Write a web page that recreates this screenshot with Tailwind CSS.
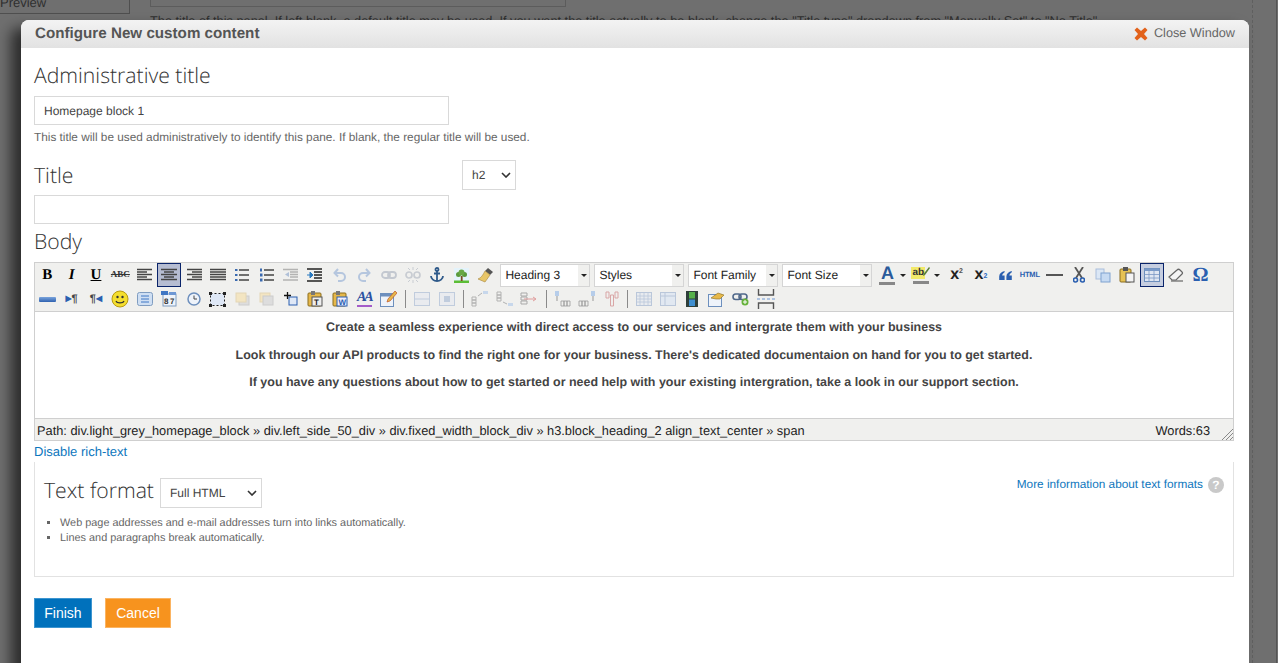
<!DOCTYPE html>
<html lang="en">
<head>
  <meta charset="UTF-8">
  <meta name="viewport" content="width=device-width, initial-scale=1.0">
  <title>Configure New custom content</title>
  <script src="https://cdn.jsdelivr.net/npm/@tailwindcss/browser@4"></script>
</head>
<body class="relative h-[663px] overflow-hidden bg-[#6f6f6f] font-['Liberation_Sans',Arial,sans-serif] text-[#4a4a4a] [text-rendering:geometricPrecision]">
  <!-- page behind the overlay -->
  <div class="flex h-full">
    <div class="h-[14px] w-[130px] shrink-0 overflow-hidden border-r border-b border-[#4f4f4f]">
      <div class="-mt-[5px] text-[13px] leading-[15px] text-[#2f2f2f]">Preview</div>
    </div>
    <div class="flex-1 border-r border-dashed border-[#5f5f5f] pl-[20px]">
      <div class="h-[7px] w-[416px] border border-t-0 border-[#5c5c5c]"></div>
      <p class="mt-[6px] whitespace-nowrap text-[12.75px] leading-[15px] text-[#2f2f2f]">The title of this panel. If left blank, a default title may be used. If you want the title actually to be blank, change the "Title type" dropdown from "Manually Set" to "No Title".</p>
    </div>
    <div class="mr-[1px] h-full w-[24px] border-r border-[#555]"></div>
  </div>

  <!-- modal -->
  <div class="absolute left-[21px] top-[20px] h-[660px] w-[1228px] rounded-t-[8px] bg-white shadow-[-10px_8px_14px_rgba(0,0,0,0.6)]">
    <div class="flex h-[28px] items-center justify-between rounded-t-[8px] bg-gradient-to-b from-[#f3f3f3] to-[#e2e2e2] pl-[14px] pr-[14px]">
      <h1 class="text-[15.2px] font-bold text-[#555]">Configure New custom content</h1>
      <div class="flex items-center gap-[6px] text-[12.7px] text-[#666]">
        <svg width="14" height="14" viewBox="0 0 14 14"><path d="M3 0.5 7 4 11 .5 13.500 3 10 7l3.500 4L11 13.500 7 10 3 13.500.5 11 4 7 .5 3z" fill="#e2611a"/></svg>
        Close Window
      </div>
    </div>

    <div class="px-[13px]">
      <h2 class="mt-[13px] font-['Open_Sans',sans-serif] text-[21.2px] font-light leading-[30px] text-[#333]">Administrative title</h2>
      <div class="mt-[5px] flex h-[29px] w-[415px] items-center border border-[#d9d9d9] px-[9px] text-[12px] text-[#444]">Homepage block 1</div>
      <p class="mt-[5px] text-[11.8px] leading-[14px] text-[#666]">This title will be used administratively to identify this pane. If blank, the regular title will be used.</p>

      <div class="mt-[16px] flex items-start">
        <div class="w-[428px]">
          <h2 class="font-['Open_Sans',sans-serif] text-[21.2px] font-light leading-[32px] text-[#333]">Title</h2>
        </div>
        <div class="flex h-[30px] w-[54px] items-center justify-between border border-[#d9d9d9] pl-[9px] pr-[4px] text-[12px] text-[#444]">h2
          <svg width="10" height="6" viewBox="0 0 10 6"><path d="M1 1l4 4 4-4" fill="none" stroke="#333" stroke-width="1.600"/></svg>
        </div>
      </div>
      <div class="mt-[3px] h-[29px] w-[415px] border border-[#d9d9d9]"></div>
      <h2 class="mt-[3px] font-['Open_Sans',sans-serif] text-[21.2px] font-light leading-[30px] text-[#333]">Body</h2>

      <!-- editor -->
      <div class="mt-[5px] w-[1200px] border border-[#cfcfcf] bg-[#f0f0ee]">
        <div class="flex h-[24px] items-center text-[#222]">
          <span class="flex h-[24px] w-[24.4px] items-center justify-center font-['Liberation_Serif',serif] text-[15px] font-bold text-black">B</span>
          <span class="flex h-[24px] w-[24.4px] items-center justify-center font-['Liberation_Serif',serif] text-[15px] font-bold italic text-black">I</span>
          <span class="flex h-[24px] w-[24.4px] items-center justify-center font-['Liberation_Serif',serif] text-[15px] font-bold text-black underline">U</span>
          <span class="flex h-[24px] w-[24.4px] items-center justify-center font-['Liberation_Serif',serif] text-[9px] font-bold text-[#333] line-through">ABC</span>
          <span class="flex h-[24px] w-[24.4px] items-center justify-center"><svg width="16" height="14" viewBox="0 0 16 14" stroke="#444" stroke-width="1.500"><path d="M0 1.500h15M0 4h10M0 6.500h15M0 9h10M0 11.500h15"/></svg></span>
          <span class="flex h-[24px] w-[24.4px] items-center justify-center border border-[#0a246a] bg-[#b6bdd2]"><svg width="16" height="14" viewBox="0 0 16 14" stroke="#444" stroke-width="1.500"><path d="M0 1.500h16M3 4h10M0 6.500h16M3 9h10M0 11.500h16"/></svg></span>
          <span class="flex h-[24px] w-[24.4px] items-center justify-center"><svg width="16" height="14" viewBox="0 0 16 14" stroke="#444" stroke-width="1.500"><path d="M1 1.500h15M6 4h10M1 6.500h15M6 9h10M1 11.500h15"/></svg></span>
          <span class="flex h-[24px] w-[24.4px] items-center justify-center"><svg width="16" height="14" viewBox="0 0 16 14" stroke="#444" stroke-width="1.500"><path d="M0 1.500h16M0 4h16M0 6.500h16M0 9h16M0 11.500h16"/></svg></span>
          <span class="flex h-[24px] w-[24.4px] items-center justify-center"><svg width="16" height="14" viewBox="0 0 16 14"><path d="M5 2h10M5 7h10M5 12h10" stroke="#444" stroke-width="1.300"/><path d="M1 1h2.500v2H1zM1 6h2.500v2H1zM1 11h2.500v2H1z" fill="#3a6ab0"/></svg></span>
          <span class="flex h-[24px] w-[24.4px] items-center justify-center"><svg width="16" height="14" viewBox="0 0 16 14"><path d="M5 2h10M5 7h10M5 12h10" stroke="#444" stroke-width="1.300"/><path d="M1 .500h2v3H1zM1 5.500h2.500v3H1zM1 10.500h2.500v3H1z" fill="#3a6ab0"/></svg></span>
          <span class="flex h-[24px] w-[24.4px] items-center justify-center"><svg width="16" height="14" viewBox="0 0 16 14" opacity=".35"><path d="M0 1.500h15M7 4h8M7 6.500h8M7 9h8M0 12h15" stroke="#444" stroke-width="1.300"/><path d="M6 4v5L2 6.500z" fill="#3a6ab0"/></svg></span>
          <span class="flex h-[24px] w-[24.4px] items-center justify-center"><svg width="16" height="16" viewBox="0 0 16 16"><path d="M0 2h15M7 5h8M7 8h8M7 11h8M0 14h15" stroke="#222" stroke-width="1.400"/><path d="M0 8h3M3 5v6l3-3z" fill="#2a7ac0" stroke="#2a7ac0"/></svg></span>
          <span class="flex h-[24px] w-[24.4px] items-center justify-center"><svg width="14" height="14" viewBox="0 0 14 14" fill="none" stroke="#b5c6de" stroke-width="2"><path d="M2 5h6a4 4 0 0 1 0 8H5"/><path d="M5 1 1.500 5 5 8.500"/></svg></span>
          <span class="flex h-[24px] w-[24.4px] items-center justify-center"><svg width="14" height="14" viewBox="0 0 14 14" fill="none" stroke="#b5c6de" stroke-width="2"><path d="M12 5H6a4 4 0 0 0 0 8h3"/><path d="M9 1l3.500 4L9 8.500"/></svg></span>
          <span class="flex h-[24px] w-[24.4px] items-center justify-center"><svg width="16" height="10" viewBox="0 0 16 10" fill="none" stroke="#c3c8d0" stroke-width="1.800"><rect x="1" y="2" width="8" height="6" rx="3"/><rect x="7" y="2" width="8" height="6" rx="3"/></svg></span>
          <span class="flex h-[24px] w-[24.4px] items-center justify-center"><svg width="16" height="16" viewBox="0 0 16 16" fill="none" stroke="#c8ccd2" stroke-width="1.700"><rect x="1" y="5" width="6" height="6" rx="3"/><rect x="9" y="5" width="6" height="6" rx="3"/><path d="M8 0v3M8 13v3M3 1l2 2M13 1l-2 2M3 15l2-2M13 15l-2-2" stroke-width="1"/></svg></span>
          <span class="flex h-[24px] w-[24.4px] items-center justify-center"><svg width="14" height="16" viewBox="0 0 14 16" fill="none" stroke="#2f5a8a" stroke-width="1.800"><circle cx="7" cy="2.500" r="1.500"/><path d="M7 4v11M4 6.500h6M1 9c0 3 3 5 6 5s6-2 6-5"/></svg></span>
          <span class="flex h-[24px] w-[24.4px] items-center justify-center"><svg width="15" height="15" viewBox="0 0 15 15"><rect width="15" height="15" fill="#e4f3fb"/><rect y="12.500" width="15" height="2.500" fill="#5cbd35"/><rect x="6.800" y="8" width="1.800" height="5" fill="#7a4a20"/><circle cx="4.500" cy="6.500" r="2.500" fill="#5a9a3c"/><circle cx="10.500" cy="6.500" r="2.500" fill="#5a9a3c"/><circle cx="7.500" cy="4.500" r="3" fill="#68a845"/></svg></span>
          <span class="flex h-[24px] w-[24.4px] items-center justify-center"><svg width="16" height="16" viewBox="0 0 16 16"><path d="M10 1l5 4-3 3-5-4z" fill="#555"/><path d="M7 4l5 4-5 7-7-3c3-1 5-4 7-8z" fill="#e8c668" stroke="#a8873a" stroke-width=".6"/></svg></span>

          <div class="ml-[2px] flex h-[23px] w-[90px] shrink-0 items-center border border-[#d5d5d5] bg-white pl-[4px] text-[12px] text-[#222]"><span class="flex-1">Heading 3</span><span class="flex h-full w-[11px] items-center justify-center bg-[#f0f0ee]"><svg width="6" height="3" viewBox="0 0 6 3"><path d="M0 0h6L3 3z" fill="#222"/></svg></span></div>
          <div class="ml-[4px] flex h-[23px] w-[90px] shrink-0 items-center border border-[#d5d5d5] bg-white pl-[4px] text-[12px] text-[#222]"><span class="flex-1">Styles</span><span class="flex h-full w-[11px] items-center justify-center bg-[#f0f0ee]"><svg width="6" height="3" viewBox="0 0 6 3"><path d="M0 0h6L3 3z" fill="#222"/></svg></span></div>
          <div class="ml-[4px] flex h-[23px] w-[90px] shrink-0 items-center border border-[#d5d5d5] bg-white pl-[4px] text-[12px] text-[#222]"><span class="flex-1">Font Family</span><span class="flex h-full w-[11px] items-center justify-center bg-[#f0f0ee]"><svg width="6" height="3" viewBox="0 0 6 3"><path d="M0 0h6L3 3z" fill="#222"/></svg></span></div>
          <div class="ml-[4px] flex h-[23px] w-[90px] shrink-0 items-center border border-[#d5d5d5] bg-white pl-[4px] text-[12px] text-[#222]"><span class="flex-1">Font Size</span><span class="flex h-full w-[11px] items-center justify-center bg-[#f0f0ee]"><svg width="6" height="3" viewBox="0 0 6 3"><path d="M0 0h6L3 3z" fill="#222"/></svg></span></div>

          <span class="ml-[5px] flex h-[24px] w-[20px] flex-col items-center justify-center text-[18px] font-bold leading-[17px] text-[#2a5a9a]">A<span class="block h-[3px] w-[16px] bg-[#888]"></span></span>
          <span class="flex w-[12px] justify-center"><svg width="6" height="3" viewBox="0 0 6 3"><path d="M0 0h6L3 3z" fill="#222"/></svg></span>
          <span class="relative ml-[2px] flex h-[24px] w-[20px] flex-col items-center justify-center text-[10px] font-bold leading-[12px] text-[#333]"><span class="self-start bg-[#f2e96a] px-[1px]">ab</span><span class="mt-[2px] block h-[3px] w-[16px] bg-[#888]"></span><svg class="absolute right-[1px] top-[4px]" width="7" height="9" viewBox="0 0 7 9"><path d="M6 0l1 1-5 7-2 1 .5-2z" fill="#5b7f3a"/></svg></span>
          <span class="flex w-[12px] justify-center"><svg width="6" height="3" viewBox="0 0 6 3"><path d="M0 0h6L3 3z" fill="#222"/></svg></span>
          <span class="ml-[1px] flex h-[24px] w-[24.4px] items-center justify-center text-[16px] font-bold leading-none text-[#222]">x<sup class="text-[7px] text-[#555]">2</sup></span>
          <span class="flex h-[24px] w-[24.4px] items-center justify-center text-[16px] font-bold leading-none text-[#222]">x<sub class="text-[7px] text-[#2a6ac0]">2</sub></span>
          <span class="flex h-[24px] w-[24.4px] items-center justify-center"><svg width="13" height="9" viewBox="0 0 14 10" fill="#2a5fb0"><path d="M6 0v1.500C4.500 2.500 3.500 3.500 3.300 5H6v5H0V6c0-3 2.500-5 6-6zM14 0v1.500c-1.500 1-2.500 2-2.700 3.500H14v5H8V6c0-3 2.500-5 6-6z"/></svg></span>
          <span class="flex h-[24px] w-[24.4px] items-center justify-center text-[7.5px] font-bold tracking-tight text-[#2a5fb0]">HTML</span>
          <span class="flex h-[24px] w-[24.4px] items-center justify-center"><span class="block h-[2px] w-[17px] bg-[#555]"></span></span>
          <span class="flex h-[24px] w-[24.4px] items-center justify-center"><svg width="12" height="16" viewBox="0 0 12 16" fill="none"><path d="M2 0l7 11M10 0L3 11" stroke="#555" stroke-width="1.800"/><circle cx="2.500" cy="13" r="2" stroke="#2a5fb0" stroke-width="1.600"/><circle cx="9.500" cy="13" r="2" stroke="#2a5fb0" stroke-width="1.600"/></svg></span>
          <span class="flex h-[24px] w-[24.4px] items-center justify-center"><svg width="16" height="15" viewBox="0 0 16 15"><rect x="1" y="1" width="8" height="10" fill="#dbe7f5" stroke="#a9bedb"/><rect x="6" y="5" width="9" height="9" fill="#c6daf2" stroke="#7fa2cf"/></svg></span>
          <span class="flex h-[24px] w-[24.4px] items-center justify-center"><svg width="16" height="16" viewBox="0 0 16 16"><rect x="1" y="2" width="11" height="13" rx="1" fill="#e6c254" stroke="#8a6d1e"/><rect x="4" y="0" width="5" height="4" fill="#555"/><rect x="7" y="6" width="8" height="9" fill="#f4f4f4" stroke="#555"/></svg></span>
          <span class="flex h-[24px] w-[24.4px] items-center justify-center border border-[#0a246a] bg-[#c6cee0]"><svg width="16" height="14" viewBox="0 0 16 14"><rect x=".5" y=".5" width="15" height="13" fill="#dfe6f2" stroke="#6d8fbd"/><rect x=".5" y=".5" width="15" height="2.500" fill="#7a9ac8"/><path d="M.5 6.500h15M.5 10h15M5 3v10.500M10 3v10.500" stroke="#7a97c4" stroke-width=".8"/></svg></span>
          <span class="flex h-[24px] w-[24.4px] items-center justify-center"><svg width="16" height="14" viewBox="0 0 16 14" fill="none" stroke="#666" stroke-width="1.200"><path d="M1 9l8-7c1-1 2-1 3 0l2 2c1 1 0 2 0 2l-6 6H4z" fill="#f4f4f4"/><path d="M3 13h12"/></svg></span>
          <span class="flex h-[24px] w-[24.4px] items-center justify-center font-['Liberation_Serif',serif] text-[20px] font-bold text-[#2a5fb0]">Ω</span>
        </div>

        <div class="flex h-[24px] items-center">
          <span class="flex h-[24px] w-[24.4px] items-center justify-center"><span class="block h-[5px] w-[17px] rounded-[1px] bg-gradient-to-b from-[#7aa4dc] to-[#2f62b0]"></span></span>
          <span class="flex h-[24px] w-[24.4px] items-center justify-center text-[11px] font-bold text-[#444]"><span class="text-[8px] text-[#2a5fb0]">▶</span>¶</span>
          <span class="flex h-[24px] w-[24.4px] items-center justify-center text-[11px] font-bold text-[#444]">¶<span class="text-[8px] text-[#2a5fb0]">◀</span></span>
          <span class="flex h-[24px] w-[24.4px] items-center justify-center"><svg width="18" height="18" viewBox="0 0 18 18"><circle cx="9" cy="9" r="8" fill="#f4de2e" stroke="#b99b10"/><circle cx="6.500" cy="7" r="1.200" fill="#333"/><circle cx="11.500" cy="7" r="1.200" fill="#333"/><path d="M5 11c1 2.500 7 2.500 8 0" fill="none" stroke="#333" stroke-width="1.200"/></svg></span>
          <span class="flex h-[24px] w-[24.4px] items-center justify-center"><svg width="16" height="14" viewBox="0 0 16 14"><rect x=".5" y=".5" width="15" height="13" rx="2" fill="#cfdff3" stroke="#7f9cc0"/><path d="M4 4h8M4 7h8M4 10h8" stroke="#3f76c4"/></svg></span>
          <span class="flex h-[24px] w-[24.4px] items-center justify-center"><svg width="16" height="16" viewBox="0 0 16 16"><rect x="2" y="3" width="13" height="12" fill="#eef3fa" stroke="#7f9cc0"/><rect x="0" y="0" width="7" height="4" fill="#3f76c4"/><rect x="8" y="1" width="7" height="3" fill="#6d97d4"/><text x="3" y="13" font-size="8" font-weight="bold" fill="#333">8</text><text x="9" y="13" font-size="8" font-weight="bold" fill="#333">7</text></svg></span>
          <span class="flex h-[24px] w-[24.4px] items-center justify-center"><svg width="14" height="14" viewBox="0 0 14 14"><circle cx="7" cy="7" r="6" fill="#eef3fa" stroke="#6d8fbd" stroke-width="1.500"/><path d="M7 3.500V7h3" fill="none" stroke="#444"/></svg></span>
          <span class="flex h-[24px] w-[24.4px] items-center justify-center"><svg width="17" height="15" viewBox="0 0 17 15"><rect x="1.500" y="1.500" width="14" height="12" fill="#dfe8f6" stroke="#222" stroke-dasharray="2 2"/><path d="M0 0h3v3H0zM14 0h3v3h-3zM0 12h3v3H0zM14 12h3v3h-3z" fill="#222"/></svg></span>
          <span class="flex h-[24px] w-[24.4px] items-center justify-center"><svg width="15" height="14" viewBox="0 0 15 14"><rect x="4" y="4" width="10" height="9" fill="#ddd" stroke="#ccc"/><rect x="1" y="1" width="10" height="9" fill="#f3e5c2" stroke="#e3d6b6"/></svg></span>
          <span class="flex h-[24px] w-[24.4px] items-center justify-center"><svg width="15" height="14" viewBox="0 0 15 14"><rect x="1" y="1" width="10" height="9" fill="#f3e5c2" stroke="#e3d6b6"/><rect x="4" y="4" width="10" height="9" fill="#ddd" stroke="#ccc"/></svg></span>
          <span class="flex h-[24px] w-[24.4px] items-center justify-center"><svg width="14" height="14" viewBox="0 0 14 14"><rect x="5" y="5" width="8" height="8" fill="#dfe8f6" stroke="#2a5fb0"/><path d="M3.500 0v7M0 3.500h7" stroke="#111" stroke-width="1.300"/></svg></span>
          <span class="flex h-[24px] w-[24.4px] items-center justify-center"><svg width="16" height="16" viewBox="0 0 16 16"><rect x="1" y="2" width="13" height="13" rx="1" fill="#e6b84a" stroke="#8a6d1e"/><rect x="4" y="0" width="4" height="4" fill="#777"/><rect x="5" y="6" width="10" height="9" fill="#eee" stroke="#555"/><text x="7" y="14" font-size="8" font-weight="bold" fill="#222">T</text></svg></span>
          <span class="flex h-[24px] w-[24.4px] items-center justify-center"><svg width="16" height="16" viewBox="0 0 16 16"><rect x="1" y="2" width="13" height="13" rx="1" fill="#e6b84a" stroke="#8a6d1e"/><rect x="4" y="0" width="4" height="4" fill="#777"/><rect x="5" y="6" width="10" height="9" fill="#eef" stroke="#2a5fb0"/><text x="6.500" y="14" font-size="8" font-weight="bold" fill="#2a5fb0">W</text></svg></span>
          <span class="flex h-[24px] w-[24.4px] items-center justify-center"><span class="border-b-2 border-[#a45cc8] font-['Liberation_Serif',serif] text-[14px] font-bold italic leading-[14px] tracking-[-2px] text-[#2a4fa0]">AA</span></span>
          <span class="flex h-[24px] w-[24.4px] items-center justify-center"><svg width="17" height="16" viewBox="0 0 17 16"><rect x=".5" y="2.500" width="13" height="13" fill="#eef3fa" stroke="#6d8fbd"/><rect x=".5" y="2.500" width="13" height="3" fill="#6d8fbd"/><path d="M15 0l2 2-7 8-3 1 1-3z" fill="#e6b84a" stroke="#c0562a" stroke-width=".7"/></svg></span>
          <span class="flex h-[24px] w-[9.2px] items-center justify-center"><span class="block h-[18px] w-[1px] bg-[#8a8a8a]"></span></span>
          <span class="flex h-[24px] w-[24.4px] items-center justify-center"><svg width="16" height="14" viewBox="0 0 16 14" opacity=".4"><rect x=".5" y=".5" width="15" height="13" fill="#dfe6f2" stroke="#7a97c4"/><path d="M.5 7h15" stroke="#7a97c4"/></svg></span>
          <span class="flex h-[24px] w-[24.4px] items-center justify-center"><svg width="16" height="14" viewBox="0 0 16 14" opacity=".4"><rect x=".5" y=".5" width="15" height="13" fill="#dfe6f2" stroke="#7a97c4"/><rect x="5" y="4" width="6" height="6" fill="#7a97c4"/></svg></span>
          <span class="flex h-[24px] w-[9.4px] items-center justify-center"><span class="block h-[18px] w-[1px] bg-[#8a8a8a]"></span></span>
          <span class="flex h-[24px] w-[24.4px] items-center justify-center"><svg width="18" height="16" viewBox="0 0 18 16" fill="none" stroke="#999" opacity=".7"><path d="M1 6h4v3H1zM1 9h4v3H1zM1 12h4v3H1z"/><path d="M7 5l4-3"/><rect x="12" y="0" width="5" height="3" fill="#b6cdea" stroke="none"/></svg></span>
          <span class="flex h-[24px] w-[24.4px] items-center justify-center"><svg width="18" height="16" viewBox="0 0 18 16" fill="none" stroke="#999" opacity=".7"><path d="M1 1h4v3H1zM1 4h4v3H1zM1 7h4v3H1z"/><path d="M7 11l4 2"/><rect x="12" y="12" width="5" height="3" fill="#b6cdea" stroke="none"/></svg></span>
          <span class="flex h-[24px] w-[24.4px] items-center justify-center"><svg width="18" height="14" viewBox="0 0 18 14" fill="none" stroke="#999" opacity=".8"><path d="M1 1h6v3H1zM1 5h6v3H1zM1 9h6v3H1z"/><path d="M4 7h11" stroke="#d88"/><path d="M13 5l3 2-3 2" stroke="#d88"/></svg></span>
          <span class="flex h-[24px] w-[9.4px] items-center justify-center"><span class="block h-[18px] w-[1px] bg-[#8a8a8a]"></span></span>
          <span class="flex h-[24px] w-[24.4px] items-center justify-center"><svg width="18" height="17" viewBox="0 0 18 17" fill="none" stroke="#999"><path d="M7 10h3v5H7zM10 10h3v5h-3zM13 10h3v5h-3z" opacity=".8"/><rect x="1" y="0" width="4" height="5" fill="#b6cdea" stroke="none"/><path d="M3 5v5"/></svg></span>
          <span class="flex h-[24px] w-[24.4px] items-center justify-center"><svg width="18" height="17" viewBox="0 0 18 17" fill="none" stroke="#999"><path d="M1 10h3v5H1zM4 10h3v5H4zM7 10h3v5H7z" opacity=".8"/><rect x="13" y="0" width="4" height="5" fill="#b6cdea" stroke="none"/><path d="M15 5v5"/></svg></span>
          <span class="flex h-[24px] w-[24.4px] items-center justify-center"><svg width="14" height="16" viewBox="0 0 14 16" fill="none" stroke="#d9a6a6"><path d="M1 1h3v6H1zM5.500 4h3v11h-3zM10 1h3v6h-3z"/></svg></span>
          <span class="flex h-[24px] w-[7.5px] items-center justify-center"><span class="block h-[18px] w-[1px] bg-[#8a8a8a]"></span></span>
          <span class="flex h-[24px] w-[24.4px] items-center justify-center"><svg width="16" height="14" viewBox="0 0 16 14" opacity=".45"><rect x=".5" y=".5" width="15" height="13" fill="#dfe6f2" stroke="#7a97c4"/><path d="M.5 4h15M.5 7h15M.5 10h15M4 .5v13M8 .5v13M12 .5v13" stroke="#7a97c4" stroke-width=".8"/></svg></span>
          <span class="flex h-[24px] w-[24.4px] items-center justify-center"><svg width="16" height="14" viewBox="0 0 16 14" opacity=".45"><rect x=".5" y=".5" width="15" height="13" fill="#cfe0f5" stroke="#7a97c4"/><path d="M.5 4h15M5 .5v13" stroke="#7a97c4"/></svg></span>
          <span class="flex h-[24px] w-[24.4px] items-center justify-center"><svg width="12" height="16" viewBox="0 0 12 16"><rect width="12" height="16" fill="#2f3f3a"/><rect x="3" y="1" width="6" height="6.500" fill="#55b04a"/><rect x="3" y="8.500" width="6" height="6.500" fill="#3f8fd0"/></svg></span>
          <span class="flex h-[24px] w-[24.4px] items-center justify-center"><svg width="17" height="15" viewBox="0 0 17 15"><rect x=".5" y="2.500" width="13" height="12" fill="#eef3fa" stroke="#6d8fbd"/><path d="M3 6l7-5 6 2-4 4H8z" fill="#e6b84a" stroke="#8a6d1e" stroke-width=".6"/></svg></span>
          <span class="flex h-[24px] w-[24.4px] items-center justify-center"><svg width="18" height="14" viewBox="0 0 18 14" fill="none"><rect x="1" y="2" width="8" height="5.500" rx="2.700" stroke="#50688a" stroke-width="1.600"/><rect x="7" y="2" width="8" height="5.500" rx="2.700" stroke="#50688a" stroke-width="1.600"/><circle cx="13" cy="10" r="3.500" fill="#66b23a"/><path d="M11 10h4M13 8v4" stroke="#fff"/></svg></span>
          <span class="flex h-[24px] w-[24.4px] items-center justify-center"><svg width="18" height="20" viewBox="0 0 18 20" fill="none" stroke="#555"><path d="M1.500 0v6h15V0M1.500 20v-6h15v6" stroke-width="1.400"/><path d="M0 10h18" stroke="#6d97d4" stroke-dasharray="3 2"/></svg></span>
        </div>

        <div class="h-[107px] border-t border-[#cfcfcf] bg-white pt-[8px] text-center text-[12.46px] font-bold leading-[15px] text-[#444]">
          <p>Create a seamless experience with direct access to our services and intergrate them with your business</p>
          <p class="mt-[12.5px]">Look through our API products to find the right one for your business. There's dedicated documentaion on hand for you to get started.</p>
          <p class="mt-[12.5px]">If you have any questions about how to get started or need help with your existing intergration, take a look in our support section.</p>
        </div>

        <div class="relative flex h-[22px] items-center justify-between border-t border-[#cfcfcf] pl-[2px] pr-[23px] pt-[2px] text-[12.8px] text-[#222]">
          <span>Path: div.light_grey_homepage_block » div.left_side_50_div » div.fixed_width_block_div » h3.block_heading_2 align_text_center » span</span>
          <span>Words:63</span>
          <svg class="absolute bottom-0 right-0" width="11" height="11" viewBox="0 0 11 11" stroke="#888"><path d="M11 0 0 11M11 4 4 11M11 8 8 11"/></svg>
        </div>
      </div>

      <a href="#" class="mt-[3px] block text-[13px] leading-[15px] text-[#0d76bd]">Disable rich-text</a>

      <!-- text format -->
      <div class="mt-[3px] h-[115px] w-[1200px] border-x border-b border-[#e2e2e2] px-[9px]">
        <div class="flex items-start justify-between">
          <div class="mt-[14px] flex items-center gap-[6px]">
            <h2 class="mb-[4px] w-[110px] whitespace-nowrap font-['Open_Sans',sans-serif] text-[21.2px] font-light leading-[30px] text-[#333]">Text format</h2>
            <div class="flex h-[30px] w-[102px] items-center justify-between border border-[#d9d9d9] pl-[9px] pr-[4px] text-[12px] text-[#444]">Full HTML
              <svg width="10" height="6" viewBox="0 0 10 6"><path d="M1 1l4 4 4-4" fill="none" stroke="#333" stroke-width="1.600"/></svg>
            </div>
          </div>
          <div class="mt-[14px] flex items-center gap-[5px] text-[11.8px] text-[#0d76bd]">
            More information about text formats
            <span class="flex h-[16px] w-[16px] items-center justify-center rounded-full bg-[#c9c9c9] text-[12px] font-bold text-white">?</span>
          </div>
        </div>
        <ul class="mt-[6px] list-[square] pl-[16px] text-[10.9px] leading-[15px] text-[#666]">
          <li>Web page addresses and e-mail addresses turn into links automatically.</li>
          <li>Lines and paragraphs break automatically.</li>
        </ul>
      </div>

      <div class="mt-[21px] flex gap-[13px]">
        <button class="h-[30px] w-[58px] border border-[#3d95d0] bg-[#0071bc] text-[14px] text-white">Finish</button>
        <button class="h-[30px] w-[66px] border border-[#fbb462] bg-[#f7931e] text-[14px] text-white">Cancel</button>
      </div>
    </div>
  </div>
</body>
</html>
